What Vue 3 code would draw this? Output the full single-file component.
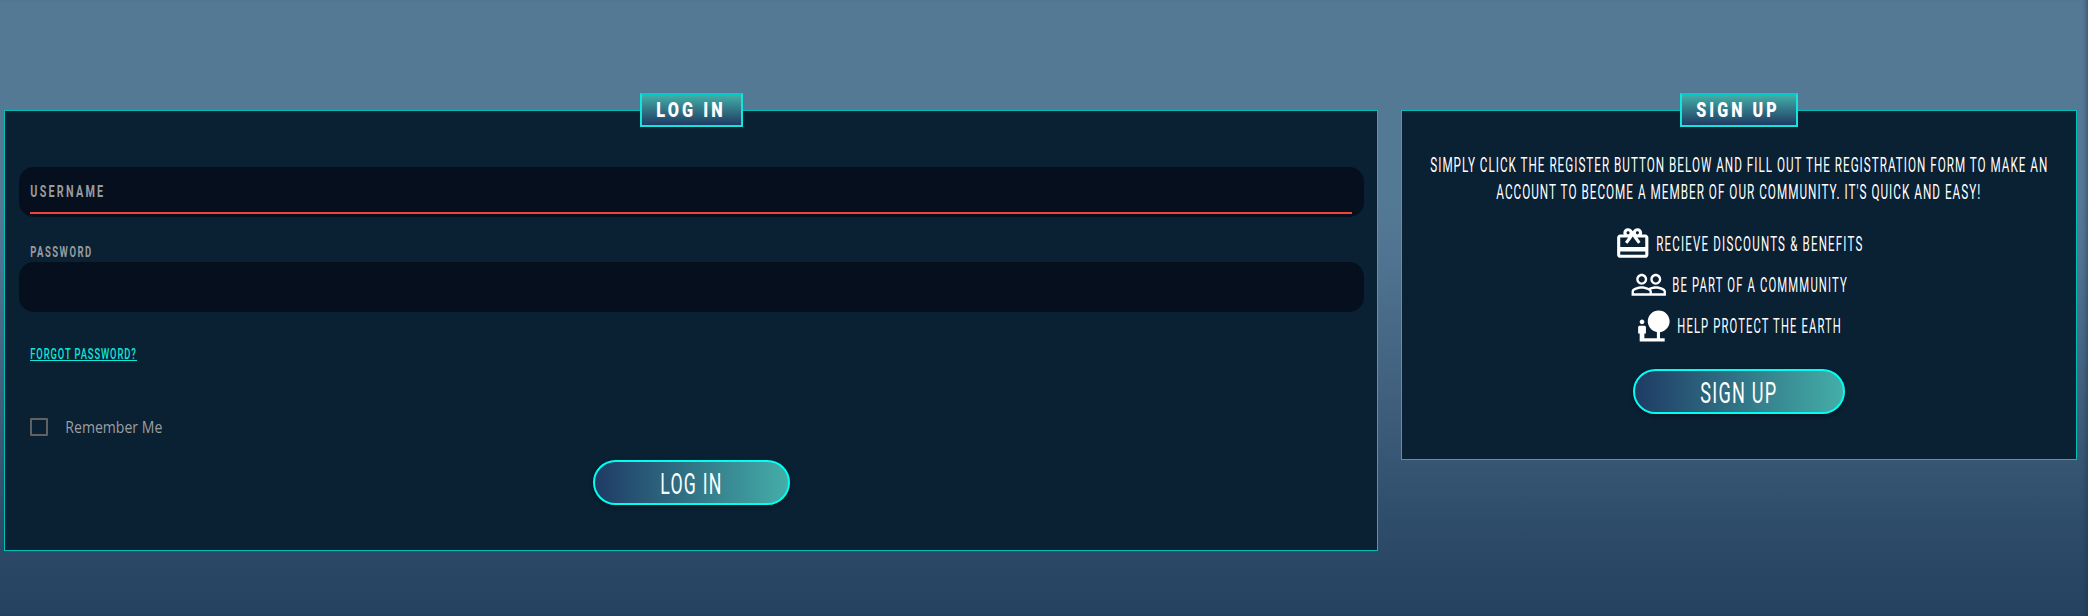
<script setup>
import { h } from 'vue'

// Condensed lettering: the svg box is exactly as tall as the capitals and as wide as the run
// plus its trailing letter gap.
const Lettering = (props) => {
  const gap = Number(props.gap || 0)
  const width = Number(props.w) + gap
  const cap = Number(props.cap)
  return h('svg', { class: 'lettering', width, height: cap, viewBox: `0 0 ${width} ${cap}` }, [
    h(
      'text',
      {
        x: 0.3,
        y: cap,
        'font-size': cap / 0.711,
        'letter-spacing': gap,
        textLength: width - gap * 0.4,
        lengthAdjust: 'spacingAndGlyphs',
      },
      props.text
    ),
  ])
}
Lettering.props = ['text', 'w', 'cap', 'gap']

const intro = [
  { text: "SIMPLY CLICK THE REGISTER BUTTON BELOW AND FILL OUT THE REGISTRATION FORM TO MAKE AN", w: 617 },
  { text: "ACCOUNT TO BECOME A MEMBER OF OUR COMMUNITY. IT'S QUICK AND EASY!", w: 484 },
]

const perks = [
  {
    text: 'RECIEVE DISCOUNTS & BENEFITS',
    w: 206,
    icon: 'M20 6h-2.18c.11-.31.18-.65.18-1 0-1.66-1.34-3-3-3-1.05 0-1.96.54-2.5 1.35l-.5.67-.5-.68C10.96 2.54 10.05 2 9 2 7.34 2 6 3.34 6 5c0 .35.07.69.18 1H4c-1.11 0-1.99.89-1.99 2L2 19c0 1.11.89 2 2 2h16c1.11 0 2-.89 2-2V8c0-1.11-.89-2-2-2zm-5-2c.55 0 1 .45 1 1s-.45 1-1 1-1-.45-1-1 .45-1 1-1zM9 4c.55 0 1 .45 1 1s-.45 1-1 1-1-.45-1-1 .45-1 1-1zm11 15H4v-2h16v2zm0-5H4V8h5.08L7 10.83 8.62 12 11 8.76l1-1.36 1 1.36L15.38 12 17 10.83 14.92 8H20v6z',
  },
  {
    text: 'BE PART OF A COMMMUNITY',
    w: 174.5,
    icon: 'M16.5 13c-1.2 0-3.07.34-4.5 1-1.43-.67-3.3-1-4.5-1C5.33 13 1 14.08 1 16.25V19h22v-2.75c0-2.17-4.33-3.25-6.5-3.25zm-4 4.5h-10v-1.25c0-.54 2.56-1.75 5-1.75s5 1.21 5 1.75v1.25zm9 0H14v-1.25c0-.46-.2-.86-.52-1.22.88-.3 1.96-.53 3.02-.53 2.44 0 5 1.21 5 1.75v1.25zM7.5 12c1.93 0 3.5-1.57 3.5-3.5S9.43 5 7.5 5 4 6.57 4 8.5 5.57 12 7.5 12zm0-5.5c1.1 0 2 .9 2 2s-.9 2-2 2-2-.9-2-2 .9-2 2-2zm9 5.5c1.93 0 3.5-1.57 3.5-3.5S18.43 5 16.5 5 13 6.57 13 8.5s1.57 3.5 3.5 3.5zm0-5.5c1.1 0 2 .9 2 2s-.9 2-2 2-2-.9-2-2 .9-2 2-2z',
  },
  {
    text: 'HELP PROTECT THE EARTH',
    w: 163.5,
    icon: 'M22.17 9.17c0-3.87-3.13-7-7-7s-7 3.13-7 7c0 3.47 2.52 6.34 5.83 6.89V20H6v-3h1v-4c0-.55-.45-1-1-1H3c-.55 0-1 .45-1 1v4h1v5h16v-2h-3v-3.88c3.47-.41 6.17-3.36 6.17-6.95zM4.5 11c.83 0 1.5-.67 1.5-1.5S5.33 8 4.5 8 3 8.67 3 9.5 3.67 11 4.5 11z',
  },
]
</script>

<template>
  <main class="page">
    <section class="panel login">
      <h2 class="badge"><Lettering text="LOG IN" w="67" cap="15" gap="4" /></h2>
      <div class="field invalid">
        <Lettering class="muted" text="USERNAME" w="73" cap="12" gap="3.5" />
      </div>
      <Lettering class="muted caption" text="PASSWORD" w="61" cap="10" gap="2.2" />
      <div class="field"></div>
      <a class="forgot"><Lettering text="FORGOT PASSWORD?" w="105.5" cap="11" gap="1.5" /></a>
      <label class="remember">
        <span class="box"></span>
        <svg class="lettering" width="98" height="12"><text x="0.3" y="11.5" textLength="97" lengthAdjust="spacingAndGlyphs">Remember Me</text></svg>
      </label>
      <button class="action"><Lettering text="LOG IN" w="61" cap="21" gap="2" /></button>
    </section>

    <section class="panel signup">
      <h2 class="badge"><Lettering text="SIGN UP" w="81" cap="15" gap="4" /></h2>
      <div class="intro">
        <Lettering v-for="line in intro" :key="line.text" :text="line.text" :w="line.w" cap="14" gap="1.7" />
      </div>
      <ul class="perks">
        <li v-for="perk in perks" :key="perk.text">
          <svg class="icon" viewBox="0 0 24 24"><path :d="perk.icon" /></svg>
          <Lettering :text="perk.text" :w="perk.w" cap="14" gap="2" />
        </li>
      </ul>
      <button class="action"><Lettering text="SIGN UP" w="76" cap="21" gap="2" /></button>
    </section>
  </main>
</template>

<style>
body {
  margin: 0;
  background: #254260;
}
</style>

<style scoped>
.page {
  box-sizing: border-box;
  width: 2088px;
  height: 616px;
  padding: 110px 11px 0 4px;
  display: flex;
  align-items: flex-start;
  gap: 23px;
  background: linear-gradient(#547995 0, #547995 200px, #4f7390 260px, #3d5c7a 420px, #2e4d6b 520px, #254260 616px);
  box-shadow: inset -5px 0 4px -3px rgba(20, 45, 70, 0.4);
}
.lettering {
  display: block;
  flex: none;
  overflow: visible;
  fill: #fff;
  font-family: Roboto, "Liberation Sans", sans-serif;
}
.panel {
  box-sizing: border-box;
  position: relative;
  display: flex;
  flex-direction: column;
  background: #0a2033;
  border: 1px solid #00bfbb;
}
.login {
  width: 1374px;
  height: 441px;
  padding: 56px 13px 0 14px;
}
.signup {
  width: 676px;
  height: 350px;
  padding-top: 47px;
  align-items: center;
}
.badge {
  position: absolute;
  top: -18px;
  box-sizing: border-box;
  height: 34px;
  margin: 0;
  padding: 7px 0 0 14px;
  border: 2px solid #12e5dc;
  border-top-color: #04cbc8;
  background: linear-gradient(#43afa9, #1f3b63);
}
.badge .lettering {
  font-weight: 900;
}
.login .badge {
  left: 635px;
  width: 103px;
}
.signup .badge {
  left: 278px;
  width: 118px;
}
.field {
  box-sizing: border-box;
  flex: none;
  height: 50px;
  padding: 18px 12px 0 11px;
  border-radius: 15px;
  background: #050f1d;
}
.invalid::after {
  content: "";
  display: block;
  height: 2px;
  margin-top: 15px;
  background: #f44336;
}
.muted {
  fill: #999b9d;
  font-weight: 700;
}
.caption {
  margin: 30px 0 5px 11px;
}
.forgot {
  align-self: flex-start;
  margin: 36px 0 0 11px;
  padding-bottom: 1px;
  border-bottom: 1px solid #0ee6dc;
}
.forgot .lettering {
  fill: #0ee6dc;
  font-weight: 500;
}
.remember {
  display: flex;
  align-items: center;
  gap: 17px;
  height: 18px;
  margin: 57px 0 24px 11px;
}
.remember .lettering {
  fill: #9c9ea0;
  font: 16px "Open Sans", "Noto Sans", sans-serif;
}
.box {
  box-sizing: border-box;
  width: 18px;
  height: 18px;
  border: 2px solid #616161;
  border-radius: 1px;
}
.action {
  box-sizing: border-box;
  flex: none;
  display: flex;
  align-items: center;
  justify-content: center;
  height: 45px;
  padding: 2px 0 0;
  border: 2px solid #00fff0;
  border-radius: 23px;
  background: linear-gradient(90deg, #1f3b64, #44aea8);
  box-shadow: 0 2px 4px rgba(0, 0, 0, 0.35);
}
.login .action {
  width: 197px;
  margin-left: 574px;
}
.signup .action {
  width: 212px;
  margin-top: 23px;
}
.intro {
  display: flex;
  flex-direction: column;
  align-items: center;
  gap: 13px;
}
.perks {
  display: flex;
  flex-direction: column;
  align-items: center;
  margin: 24px 0 0;
  padding: 0;
  list-style: none;
}
.perks li {
  display: flex;
  align-items: center;
  gap: 4.5px;
  height: 41px;
}
.icon {
  width: 37.5px;
  height: 37.5px;
  fill: #fff;
}
</style>
